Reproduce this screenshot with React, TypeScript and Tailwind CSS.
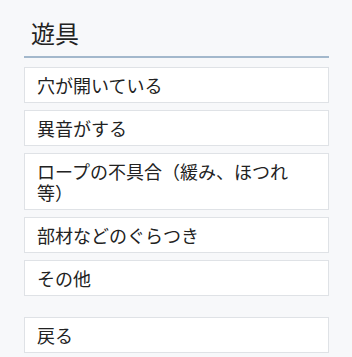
// Playground equipment issue picker

const items = [
  '穴が開いている',
  '異音がする',
  'ロープの不具合（緩み、ほつれ等）',
  '部材などのぐらつき',
  'その他',
];

function OptionButton({ label, className = '' }: { label: string; className?: string }) {
  return (
    <button
      type="button"
      className={`block w-full text-left bg-white border border-[#dfe2e6] pl-3 pr-9 py-[6.5px] text-[18px] leading-[21px] text-[#222] ${className}`}
    >
      {label}
    </button>
  );
}

export default function App() {
  return (
    <div
      className="min-h-[357px] bg-[#f7f8fa] pt-[15px]"
      style={{ fontFamily: '"Noto Sans CJK JP", "Noto Sans", sans-serif' }}
    >
      <div className="ml-6 w-[305px]">
        {/* Header */}
        <h2 className="pl-[7px] pb-[5px] text-[24px] leading-[36px] text-[#222] border-b-2 border-[#a3b8cc]">
          遊具
        </h2>

        {/* Options */}
        <div className="mt-[9px] flex flex-col gap-[7px]">
          {items.map((item) => (
            <OptionButton key={item} label={item} />
          ))}
        </div>

        <OptionButton label="戻る" className="mt-[21px]" />
      </div>
    </div>
  );
}
